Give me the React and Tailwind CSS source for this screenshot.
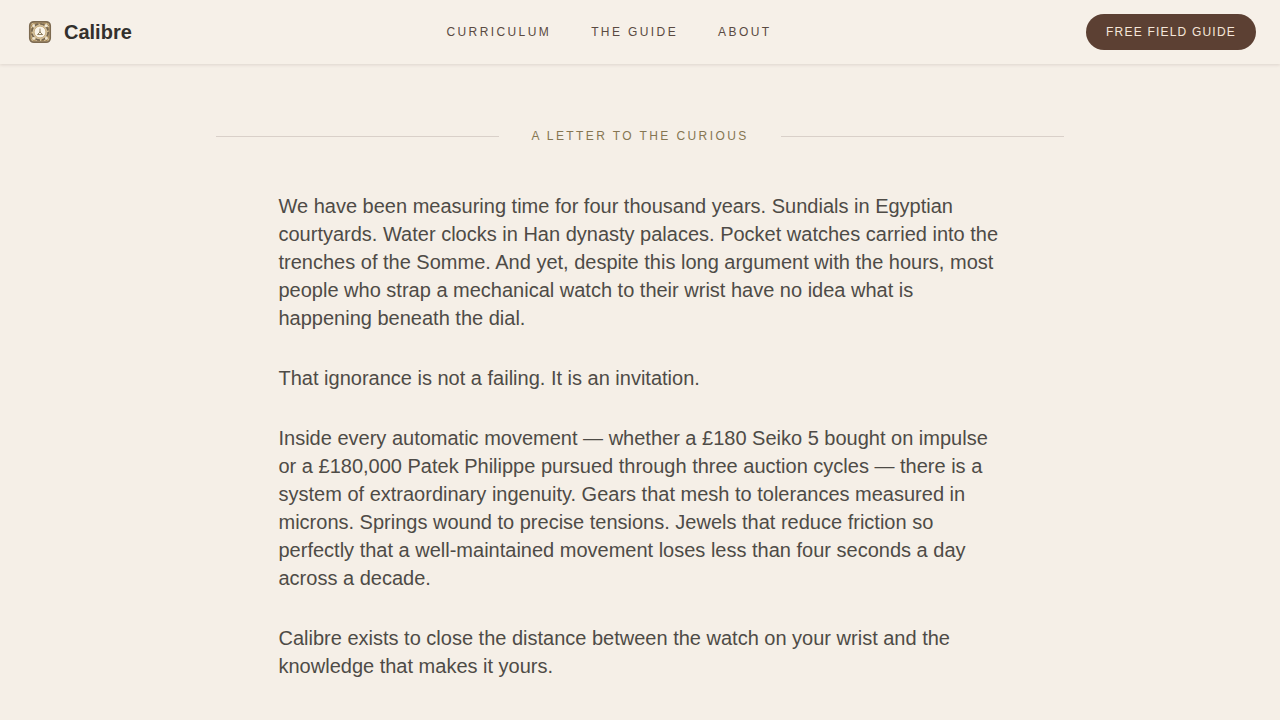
const navLinks = [
  { label: 'Curriculum', href: '#curriculum' },
  { label: 'The Guide', href: '#guide' },
  { label: 'About', href: '#about' },
];

const paragraphs = [
  'We have been measuring time for four thousand years. Sundials in Egyptian courtyards. Water clocks in Han dynasty palaces. Pocket watches carried into the trenches of the Somme. And yet, despite this long argument with the hours, most people who strap a mechanical watch to their wrist have no idea what is happening beneath the dial.',
  'That ignorance is not a failing. It is an invitation.',
  'Inside every automatic movement — whether a £180 Seiko 5 bought on impulse or a £180,000 Patek Philippe pursued through three auction cycles — there is a system of extraordinary ingenuity. Gears that mesh to tolerances measured in microns. Springs wound to precise tensions. Jewels that reduce friction so perfectly that a well-maintained movement loses less than four seconds a day across a decade.',
  'Calibre exists to close the distance between the watch on your wrist and the knowledge that makes it yours.',
];

// Square movement plate with a gear ring and balance in the middle
const Logo = () => (
  <svg viewBox="0 0 32 32" className="h-8 w-8" fill="none" aria-hidden="true">
    <rect x="5.8" y="5.8" width="20.4" height="20.4" rx="4" fill="#d6c29c" stroke="#7d6a50" strokeWidth="1.7" />
    <rect x="7.3" y="7.3" width="17.4" height="17.4" rx="3" stroke="#a3834f" strokeWidth="1" strokeDasharray="3 1.2" />
    <circle cx="16" cy="16" r="8.2" stroke="#776650" strokeWidth="1.7" strokeDasharray="4.6 1.84" />
    <circle cx="9.8" cy="9.8" r="1.2" fill="#efe5d2" />
    <circle cx="22.2" cy="9.8" r="1.4" fill="#f3ebdc" />
    <circle cx="9.8" cy="22.2" r="1.2" fill="#efe5d2" />
    <circle cx="22.2" cy="22.2" r="1.2" fill="#efe5d2" />
    <circle cx="16" cy="16" r="5.9" fill="#f9f3e8" stroke="#bfa170" strokeWidth="0.8" />
    <path d="M16 13V16.2M16 16L13.8 18.2M16 16L18.2 18.2M13.8 18.5H18.4" stroke="#8f8062" strokeWidth="1" strokeLinecap="round" />
  </svg>
);

const Header = () => (
  <header className="sticky top-0 z-10 bg-[#f6f0e8] shadow-[0_1px_3px_rgba(92,64,51,0.15)]">
    <div className="flex h-16 items-center justify-between px-6">
      <a href="#top" className="flex items-center gap-2">
        <Logo />
        <span className="text-xl font-bold text-[#33302d]">Calibre</span>
      </a>
      <nav className="flex items-center gap-10">
        {navLinks.map((link) => (
          <a key={link.href} href={link.href} className="text-xs uppercase tracking-[0.2em] text-[#5a4a42]">
            {link.label}
          </a>
        ))}
      </nav>
      <button type="button" className="rounded-full bg-[#5c4033] px-5 py-2.5 text-xs uppercase tracking-widest text-[#f5e6da]">
        Free Field Guide
      </button>
    </div>
  </header>
);

const Letter = () => (
  <section className="mx-auto max-w-4xl px-6 py-16">
    <div className="mb-12 flex items-center gap-8">
      <div className="h-px flex-1 bg-[#d9d0c9]"></div>
      <h2 className="text-xs uppercase tracking-[0.2em] text-[#857652]">A Letter to the Curious</h2>
      <div className="h-px flex-1 bg-[#d9d0c9]"></div>
    </div>
    <div className="mx-auto max-w-[65ch] space-y-8 text-xl text-[#4e4b46]">
      {paragraphs.map((text) => (
        <p key={text}>{text}</p>
      ))}
    </div>
  </section>
);

const App = () => {
  return (
    <div id="top" className="min-h-screen bg-[#f5efe7] font-['Liberation_Sans',Arial,sans-serif]">
      <Header />
      <main>
        <Letter />
      </main>
    </div>
  );
};

export default App;
